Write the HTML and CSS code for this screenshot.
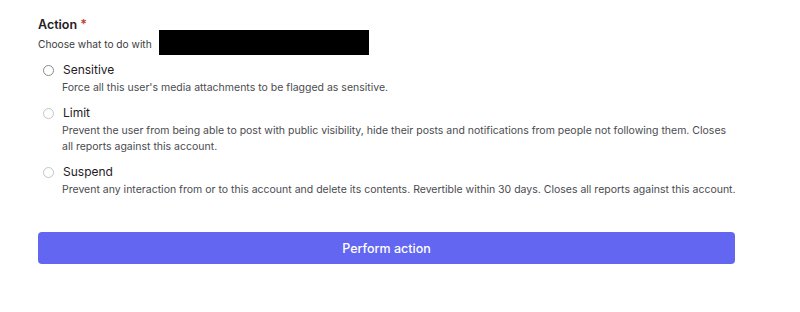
FILE: index.html
```html
<!DOCTYPE html>
<html lang="en">
<head>
    <meta charset="UTF-8">
    <title>Action</title>
    <link rel="stylesheet" href="styles.css">
</head>
<body>
    <form class="action-form">
        <div class="field">
            <div class="field-label">Action <span class="required">*</span></div>
            <div class="field-hint">Choose what to do with <span class="redacted"></span></div>
        </div>

        <div class="options">
            <label class="option">
                <span class="option-row">
                    <input type="radio" name="action" class="radio">
                    <span class="option-title">Sensitive</span>
                </span>
                <span class="option-desc">Force all this user's media attachments to be flagged as sensitive.</span>
            </label>
            <label class="option">
                <span class="option-row">
                    <input type="radio" name="action" class="radio light">
                    <span class="option-title">Limit</span>
                </span>
                <span class="option-desc">Prevent the user from being able to post with public visibility, hide their posts and notifications from people not following them. Closes all reports against this account.</span>
            </label>
            <label class="option">
                <span class="option-row">
                    <input type="radio" name="action" class="radio light">
                    <span class="option-title">Suspend</span>
                </span>
                <span class="option-desc">Prevent any interaction from or to this account and delete its contents. Revertible within 30 days. Closes all reports against this account.</span>
            </label>
        </div>

        <button type="button" class="submit-btn">Perform action</button>
    </form>
</body>
</html>
```

FILE: styles.css
```css
* {
    margin: 0;
    padding: 0;
    box-sizing: border-box;
}

body {
    font-family: Inter, "Noto Sans", sans-serif;
    background: #fff;
    color: #1f2024;
    width: 800px;
    height: 312px;
    overflow: hidden;
}

.action-form {
    padding: 17px 64px 0 38px;
}

.field-label {
    font-size: 12.5px;
    font-weight: 600;
    line-height: 16px;
}

.required {
    color: #c0392b;
}

.field-hint {
    display: flex;
    align-items: flex-end;
    gap: 7px;
    margin-top: -3px;
    font-size: 10.2px;
    color: #3a3b40;
    line-height: 22px;
}

.redacted {
    display: inline-block;
    width: 210px;
    height: 25px;
    background: #000;
}

.options {
    display: flex;
    flex-direction: column;
    gap: 8px;
    margin-top: 6px;
}

.option {
    display: flex;
    flex-direction: column;
    cursor: pointer;
}

.option-row {
    display: flex;
    align-items: center;
    gap: 9px;
    padding-left: 5px;
    height: 18px;
}

.radio {
    appearance: none;
    width: 11px;
    height: 11px;
    border: 1px solid #8a8b90;
    border-radius: 50%;
    background: #fff;
    margin: 0;
}

.radio.light {
    border-color: #c4c5c9;
}

.option-title {
    font-size: 12px;
    line-height: 18px;
    color: #1f2024;
}

.option-desc {
    padding-left: 24px;
    font-size: 10.5px;
    line-height: 16px;
    color: #4a4b50;
    margin-top: 1px;
}

.submit-btn {
    display: block;
    width: 697px;
    height: 32px;
    margin-top: 34px;
    border: none;
    border-radius: 4px;
    background: #6366f1;
    color: #fff;
    font-family: Inter, "Noto Sans", sans-serif;
    font-size: 12.5px;
    font-weight: 500;
    cursor: pointer;
}
```
